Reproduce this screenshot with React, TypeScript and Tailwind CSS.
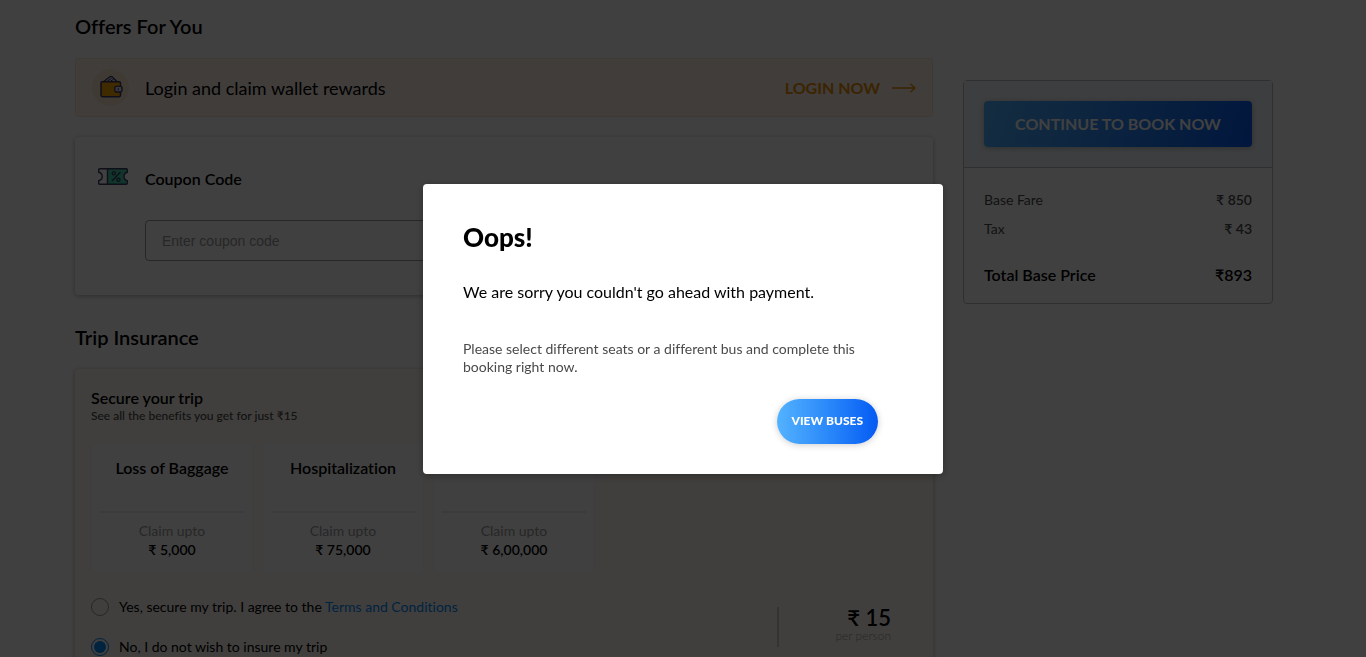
import React from "react";

const benefits = [
  { title: "Loss of Baggage", amount: "₹ 5,000" },
  { title: "Hospitalization", amount: "₹ 75,000" },
  { title: "Accidental Death", amount: "₹ 6,00,000" },
];

function WalletIcon() {
  return (
    <svg width="37" height="37" viewBox="0 0 37 37" aria-hidden="true">
      <circle cx="18.5" cy="18.5" r="18.5" fill="#fbe6cf" />
      <path d="M11 13 L18 7.8 Q19 7 20 7.8 L25.5 13 Z" fill="#e4e0f5" stroke="#3d3a63" strokeWidth="1.3" strokeLinejoin="round" />
      <path d="M15 12.5 L19.5 9.3 M18 12.5 L21.5 10.3" stroke="#3d3a63" strokeWidth="1" fill="none" />
      <rect x="9" y="12.7" width="19.5" height="15" rx="1.4" fill="#ffa800" stroke="#3d3a63" strokeWidth="1.5" />
      <rect x="22.8" y="17.4" width="7.2" height="5.6" rx="1.4" fill="#e4e0f5" stroke="#3d3a63" strokeWidth="1.4" />
      <path d="M26.3 19.2v2" stroke="#3d3a63" strokeWidth="1.2" />
    </svg>
  );
}

function CouponIcon() {
  return (
    <svg width="30" height="17" viewBox="0 0 30 17" aria-hidden="true">
      <path d="M9.5 .7H28.3Q29.3 .7 29.3 1.7V4.3Q26 5 26 8.5T29.3 12.7V15.3Q29.3 16.3 28.3 16.3H9.5Z" fill="#43d3ac" />
      <path d="M1.7 .7H28.3Q29.3 .7 29.3 1.7V4.3Q26 5 26 8.5T29.3 12.7V15.3Q29.3 16.3 28.3 16.3H1.7Q.7 16.3 .7 15.3V12.7Q4.2 12 4.2 8.5T.7 4.3V1.7Q.7 .7 1.7 .7ZM9.5 .7V16.3" fill="none" stroke="#3d3a63" strokeWidth="1.4" />
      <path d="M22.5 4 14 13" stroke="#3d3a63" strokeWidth="1.4" />
      <circle cx="15.8" cy="5.3" r="1.6" fill="none" stroke="#3d3a63" strokeWidth="1.3" />
      <circle cx="20.4" cy="11.7" r="1.6" fill="none" stroke="#3d3a63" strokeWidth="1.3" />
    </svg>
  );
}

function Offers() {
  return (
    <section>
      <h2 className="text-[20px] leading-6 font-semibold">Offers For You</h2>
      <div className="mt-5 flex h-[59px] items-center rounded border border-[#fbe3cc] bg-[#fff2e9] px-4">
        <WalletIcon />
        <p className="ml-4 flex-1 text-[18px] leading-6">Login and claim wallet rewards</p>
        <a href="#login" className="flex items-center gap-3 text-[16px] font-bold text-[#ec8e00]">
          LOGIN NOW
          <svg width="24" height="10" viewBox="0 0 24 10" fill="none" stroke="#ec8e00" strokeWidth="1.3" aria-hidden="true">
            <path d="M0 5H23M18.5 .7 23 5 18.5 9.3" />
          </svg>
        </a>
      </div>
      <div className="mt-5 rounded bg-white px-[23px] pt-[30px] pb-[34px] shadow-[0_1px_5px_rgba(0,0,0,0.3)]">
        <div className="flex">
          <span className="w-[47px] pt-px">
            <CouponIcon />
          </span>
          <label htmlFor="coupon" className="text-[16px] leading-6 font-semibold">Coupon Code</label>
        </div>
        <input
          id="coupon"
          type="text"
          placeholder="Enter coupon code"
          className="mt-[29px] ml-[47px] h-[41px] w-[500px] rounded border border-[#9b9b9b] bg-white px-4 font-['Liberation_Sans',Arial,sans-serif] text-[14px] placeholder:text-[#9b9b9b]"
        />
      </div>
    </section>
  );
}

function Insurance() {
  return (
    <section className="mt-[30px]">
      <h2 className="text-[20px] leading-6 font-semibold">Trip Insurance</h2>
      <div className="mt-5 h-[360px] rounded bg-[#fffaf3] px-4 pt-5 shadow-[0_1px_5px_rgba(0,0,0,0.3)]">
        <h3 className="text-[16px] leading-[18px] font-semibold">Secure your trip</h3>
        <p className="text-[12px] leading-[18px] font-medium text-[#4a4a4a]">See all the benefits you get for just ₹15</p>
        <ul className="mt-[18px] flex gap-[9px]">
          {benefits.map((b) => (
            <li key={b.title} className="h-[130px] w-[162px] rounded border border-[#faf8f8] bg-white px-2 text-center">
              <h4 className="mt-[14px] h-[55px] border-b-2 border-[#eaeaf7] text-[16px] leading-[20px] font-semibold">{b.title}</h4>
              <p className="mt-[8px] text-[14px] leading-[19px] text-[#9b9b9b]">Claim upto</p>
              <p className="text-[14px] leading-[19px] font-semibold">{b.amount}</p>
            </li>
          ))}
        </ul>
        <div className="mt-[25px] flex justify-between pr-[26px]">
          <div className="flex flex-col gap-[22px] text-[14px] leading-[18px]">
            <label className="flex items-center gap-[10px]">
              <input type="radio" name="insurance" className="size-[18px] appearance-none rounded-full border border-[#9b9b9b]" />
              <span>
                Yes, secure my trip. I agree to the <a href="#terms" className="text-[#008cff]">Terms and Conditions</a>
              </span>
            </label>
            <label className="flex items-center gap-[10px]">
              <input
                type="radio"
                name="insurance"
                defaultChecked
                className="size-[18px] appearance-none rounded-full border border-[#008cff] bg-[#008cff] bg-clip-content p-[2px]"
              />
              <span>No, I do not wish to insure my trip</span>
            </label>
          </div>
          <div className="mt-[9px] flex h-10 w-[114px] flex-col items-end border-l-2 border-[#cbcbcb] text-right">
            <p className="text-[22px] leading-[22px] font-semibold">₹ 15</p>
            <p className="text-[12px] leading-[14px] font-light text-[#9b9b9b]">per person</p>
          </div>
        </div>
      </div>
    </section>
  );
}

function FareSummary() {
  return (
    <aside className="mt-[66px] w-[310px] shrink-0 self-start rounded border border-[#bcbcbc] bg-white">
      <div className="border-b border-[#bcbcbc] bg-[#f2f5fa] p-5">
        <button type="button" className="h-[46px] w-full rounded bg-linear-110 from-[#53b2fe] to-[#065af3] text-[16px] font-bold text-white shadow-[0_1px_5px_rgba(0,0,0,0.25)]">
          CONTINUE TO BOOK NOW
        </button>
      </div>
      <dl className="pt-[23px] pb-[17px] text-[14px] leading-[18px] text-[#4a4a4a]">
        <div className="flex justify-between px-5">
          <dt>Base Fare</dt>
          <dd className="font-semibold">₹ 850</dd>
        </div>
        <div className="mt-[11px] flex justify-between px-5">
          <dt>Tax</dt>
          <dd className="font-semibold">₹ 43</dd>
        </div>
        <div className="mt-[9px] flex justify-between border-t border-[#f9f9f9] px-5 pt-4 text-[16px] leading-[22px] font-semibold text-black">
          <dt>Total Base Price</dt>
          <dd>₹893</dd>
        </div>
      </dl>
    </aside>
  );
}

function PaymentDialog() {
  return (
    <div className="fixed inset-0 flex items-center justify-center bg-black/75">
      <div role="dialog" aria-modal="true" aria-labelledby="dialog-title" className="w-[520px] rounded bg-white pt-[39px] pr-[65px] pb-[30px] pl-10 shadow-[0_2px_8px_rgba(0,0,0,0.3)]">
        <h1 id="dialog-title" className="text-[26px] leading-7 font-black">Oops!</h1>
        <p className="mt-[31px] text-[16px] leading-5">We are sorry you couldn't go ahead with payment.</p>
        <p className="mt-[38px] text-[14px] leading-[18px] text-[#4a4a4a]">
          Please select different seats or a different bus and complete this booking right now.
        </p>
        <div className="mt-[23px] flex justify-end">
          <button type="button" className="h-[45px] rounded-full bg-linear-to-r from-[#53b2fe] to-[#065af3] px-[15px] text-[12px] font-black text-white shadow-[0_1px_7px_rgba(0,0,0,0.2)]">
            VIEW BUSES
          </button>
        </div>
      </div>
    </div>
  );
}

export default function App() {
  return (
    <div className="h-screen overflow-hidden bg-white pr-[18px] font-[Lato,sans-serif] text-black [font-variant-ligatures:none]">
      <main className="mx-auto flex max-w-[1198px] gap-[30px] pt-[14px]">
        <div className="min-w-0 flex-1">
          <Offers />
          <Insurance />
        </div>
        <FareSummary />
      </main>
      <PaymentDialog />
    </div>
  );
}
